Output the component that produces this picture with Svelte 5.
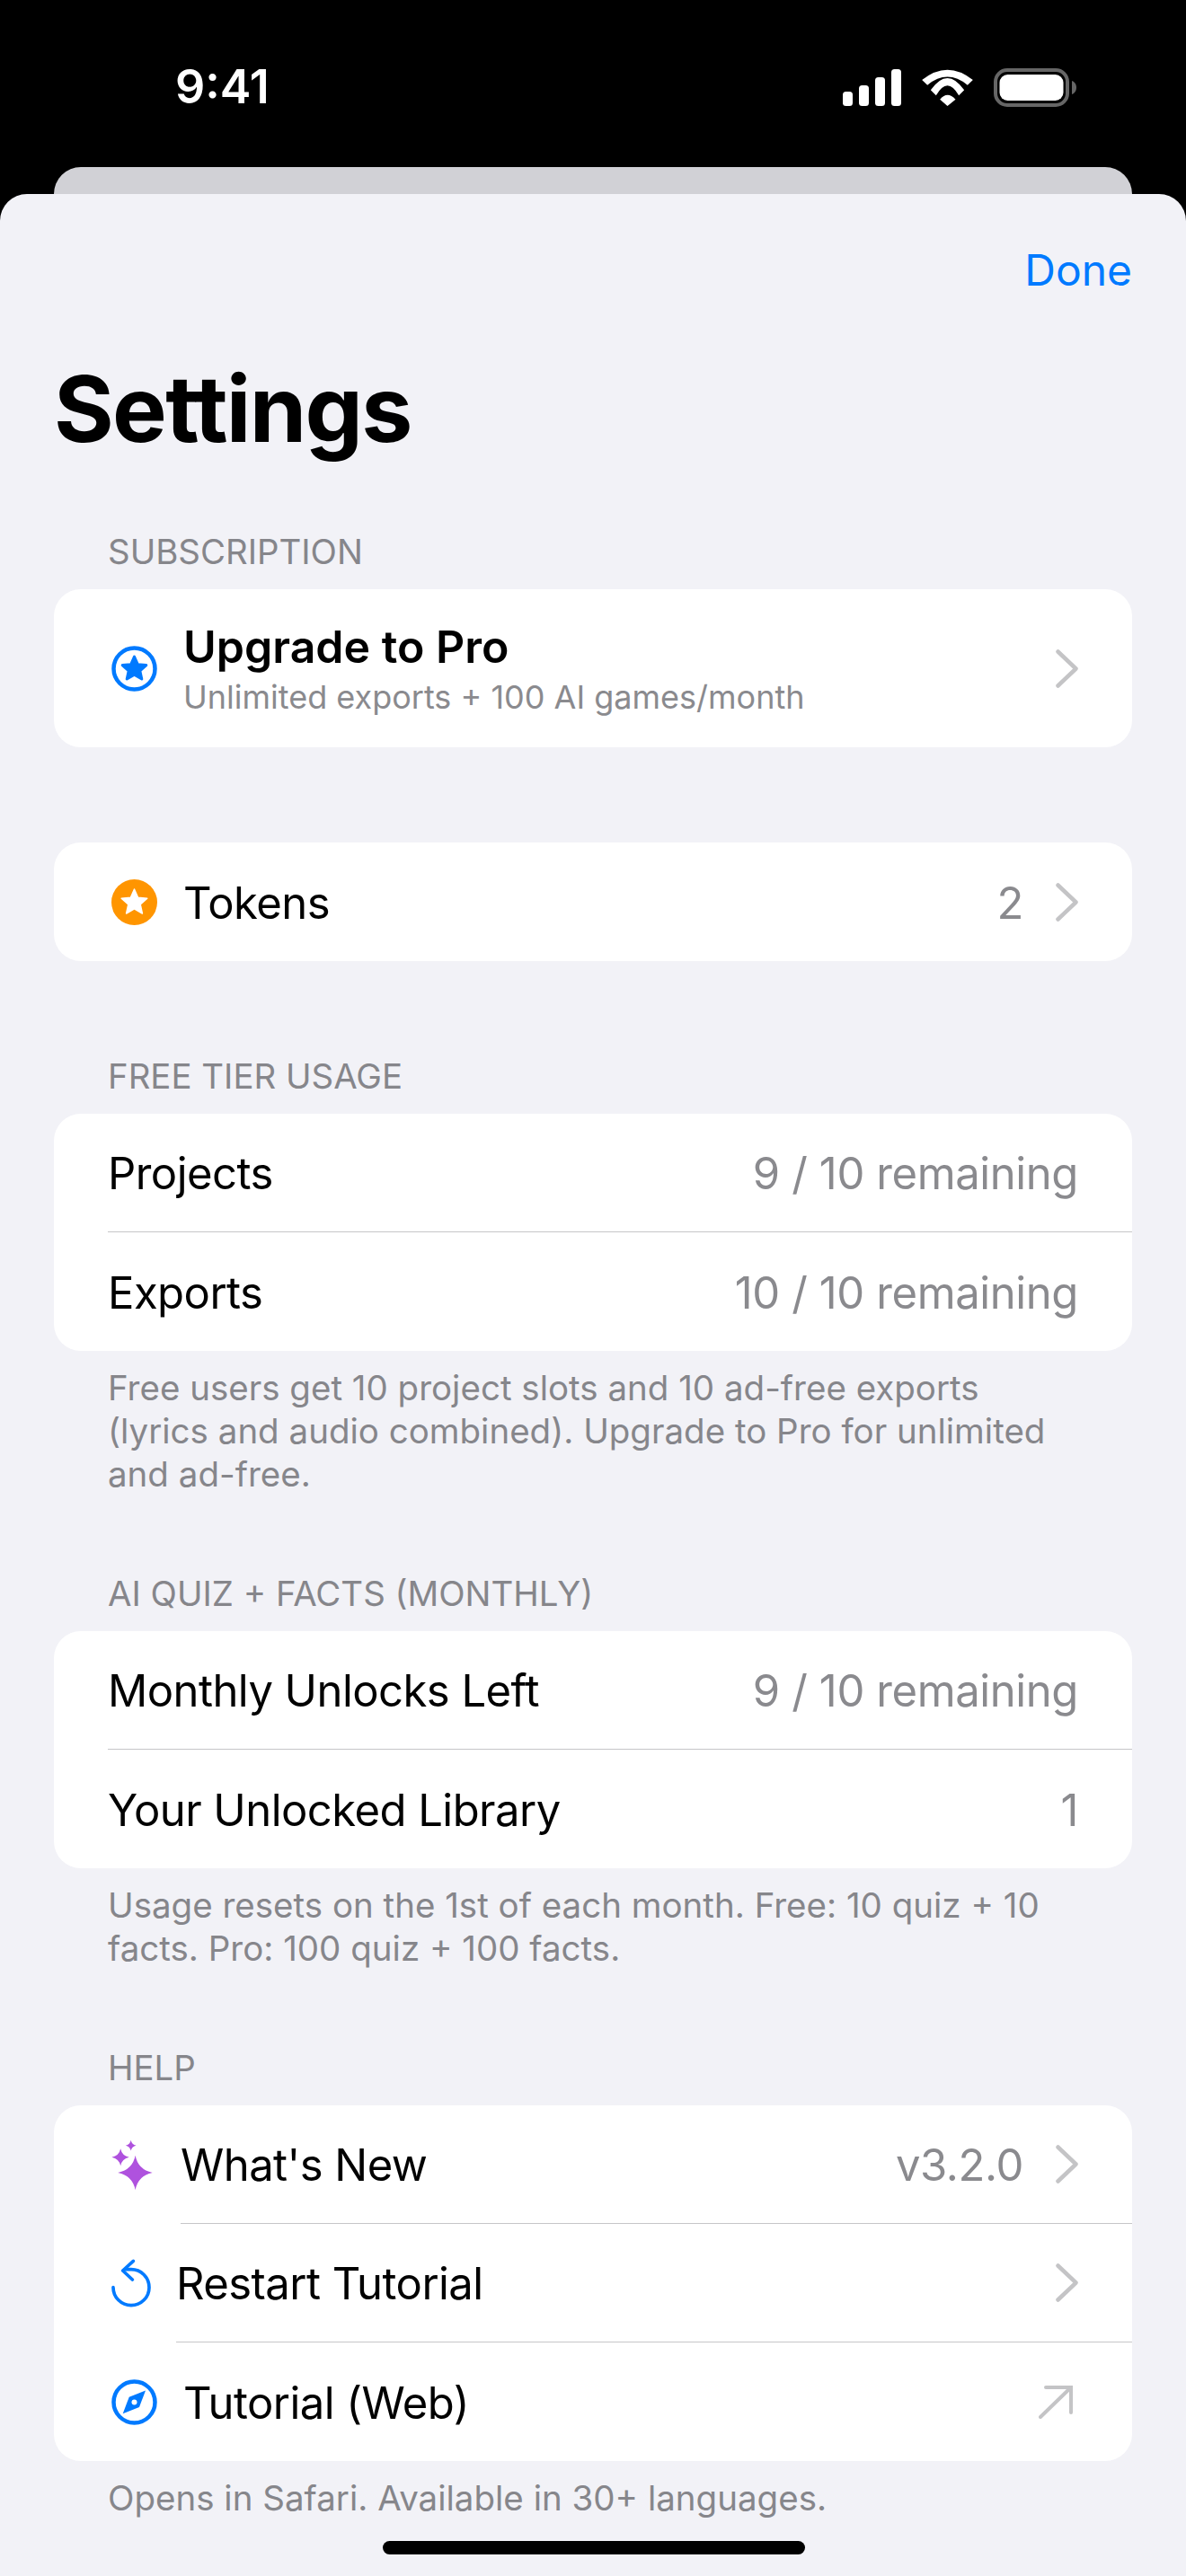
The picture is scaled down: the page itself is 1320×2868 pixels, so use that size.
<script lang="ts">
  let { version = "v3.2.0" } = $props();
</script>

{#snippet chevron()}
  <svg class="chev" width="25" height="43" viewBox="0 0 25 43"><path d="M2.5 2.5 L22.5 21.5 L2.5 40.5" /></svg>
{/snippet}

<div class="screen">
  <header class="status">
    <span class="time">9:41</span>
    <div class="status-icons">
      <svg width="65" height="41" viewBox="0 0 65 41" fill="#fff">
        <rect x="0" y="25" width="11" height="16" rx="3.5" />
        <rect x="18" y="18" width="11" height="23" rx="3.5" />
        <rect x="36" y="9" width="11" height="32" rx="3.5" />
        <rect x="54" y="0" width="11" height="41" rx="3.5" />
      </svg>
      <svg width="57" height="41" viewBox="375 77 170 123" fill="#fff">
        <path d="M375 113 Q460 45 545 113 L527 130 Q460 75 393 130 Z" />
        <path d="M404 147 Q460 67 516 147 L498 165 Q460 99 422 165 Z" />
        <path d="M435 178 Q460 148 487 178 L460 200 Z" />
      </svg>
      <svg width="92" height="43" viewBox="0 0 92 43">
        <rect x="2" y="2" width="80" height="39" rx="13" fill="none" stroke="#666" stroke-width="4" />
        <rect x="6.500" y="7" width="71" height="29" rx="9" fill="#fff" />
        <path d="M87 14 C90 15 92 18 92 21.500 C92 25 90 28 87 29 Z" fill="#666" />
      </svg>
    </div>
  </header>

  <div class="back-card"></div>

  <main class="sheet">
    <nav class="nav"><span class="done">Done</span></nav>
    <h1>Settings</h1>

    <section class="sub-section">
      <h2>SUBSCRIPTION</h2>
      <div class="card">
        <div class="row tall">
          <svg class="icon" width="51" height="51" viewBox="0 0 51 51">
            <circle cx="25.500" cy="25.500" r="23" fill="none" stroke="#007aff" stroke-width="4.500" />
            <path d="M25.500 12 L29.400 20.800 L38.800 21.600 L31.800 27.900 L33.800 37 L25.500 32.200 L17.200 37 L19.200 27.900 L12.200 21.600 L21.600 20.800 Z" fill="#007aff" stroke="#007aff" stroke-width="3" stroke-linejoin="round" />
          </svg>
          <div class="body">
            <div class="stack">
              <span class="strong">Upgrade to Pro</span>
              <span class="sub">Unlimited exports + 100 AI games/month</span>
            </div>
            {@render chevron()}
          </div>
        </div>
      </div>
    </section>

    <section class="token-section">
      <div class="card">
        <div class="row">
          <svg class="icon" width="51" height="51" viewBox="0 0 51 51">
            <circle cx="25.500" cy="25.500" r="25.500" fill="#ff9500" />
            <path d="M25.500 11 L29.600 20.300 L39.800 21.300 L32.200 28 L34.400 38 L25.500 32.900 L16.600 38 L18.800 28 L11.200 21.300 L21.400 20.300 Z" fill="#fff" stroke="#fff" stroke-width="1.500" stroke-linejoin="round" />
          </svg>
          <div class="body">
            <span class="label">Tokens</span>
            <span class="value">2</span>
            {@render chevron()}
          </div>
        </div>
      </div>
    </section>

    <section class="usage-section">
      <h2>FREE TIER USAGE</h2>
      <div class="card">
        <div class="row plain"><div class="body line"><span class="label">Projects</span><span class="value">9 / 10 remaining</span></div></div>
        <div class="row plain"><div class="body"><span class="label">Exports</span><span class="value">10 / 10 remaining</span></div></div>
      </div>
      <p class="foot">Free users get 10 project slots and 10 ad-free exports<br />(lyrics and audio combined). Upgrade to Pro for unlimited<br />and ad-free.</p>
    </section>

    <section>
      <h2>AI QUIZ + FACTS (MONTHLY)</h2>
      <div class="card">
        <div class="row plain"><div class="body line"><span class="label">Monthly Unlocks Left</span><span class="value">9 / 10 remaining</span></div></div>
        <div class="row plain"><div class="body"><span class="label">Your Unlocked Library</span><span class="value">1</span></div></div>
      </div>
      <p class="foot">Usage resets on the 1st of each month. Free: 10 quiz + 10<br />facts. Pro: 100 quiz + 100 facts.</p>
    </section>

    <section>
      <h2>HELP</h2>
      <div class="card">
        <div class="row">
          <svg class="icon" width="46" height="57" viewBox="254 127 140 171" fill="#af52de">
            <path d="M335 180 Q344 228 393 238 Q344 248 335 297 Q326 248 276 238 Q326 228 335 180 Z" />
            <path d="M285 157 Q290 181 314 186 Q290 191 285 215 Q280 191 255 186 Q280 181 285 157 Z" />
            <path d="M320 128 Q323 143 338 146 Q323 149 320 164 Q317 149 302 146 Q317 143 320 128 Z" />
          </svg>
          <div class="body line tight-a">
            <span class="label">What's New</span>
            <span class="value">{version}</span>
            {@render chevron()}
          </div>
        </div>
        <div class="row">
          <svg class="icon" width="45" height="54" viewBox="252 523 135 162" fill="none" stroke="#007aff" stroke-width="11" stroke-linecap="round" stroke-linejoin="round">
            <path d="M258 618 A60 60 0 1 0 318 558 L300 558" />
            <path d="M325 530 L290 562 L322 592" />
          </svg>
          <div class="body line tight-b">
            <span class="label">Restart Tutorial</span>
            {@render chevron()}
          </div>
        </div>
        <div class="row">
          <svg class="icon" width="51" height="51" viewBox="0 0 51 51">
            <circle cx="25.500" cy="25.500" r="23" fill="none" stroke="#007aff" stroke-width="4.500" />
            <path d="M38 12.500 L31 31 L12.700 38.300 L19.700 19.800 Z" fill="#007aff" />
            <circle cx="25.500" cy="25.500" r="3" fill="#fff" />
          </svg>
          <div class="body">
            <span class="label">Tutorial (Web)</span>
            <svg class="ext" width="38" height="37" viewBox="0 0 38 37" fill="none" stroke="#c4c4c6" stroke-width="4" stroke-linecap="round"><path d="M8 2 L36 2 L36 30 M36 2 L2 35" /></svg>
          </div>
        </div>
      </div>
      <p class="foot">Opens in Safari. Available in 30+ languages.</p>
    </section>

    <div class="home-bar"></div>
  </main>
</div>

<style>
  :global(body) { background: #000; }

  .screen {
    width: 1320px;
    height: 2868px;
    overflow: hidden;
    background: #000;
    font-family: Inter, "Liberation Sans", sans-serif;
    color: #000;
    display: flex;
    flex-direction: column;
  }

  .status {
    height: 186px;
    flex: none;
    box-sizing: border-box;
    padding: 72px 122px 0 195px;
    display: flex;
    justify-content: space-between;
    align-items: flex-start;
  }
  .time { color: #fff; font-size: 52px; font-weight: 600; line-height: 50px; }
  .status-icons { display: flex; gap: 23px; align-items: center; padding-top: 4px; }

  .back-card {
    height: 30px;
    flex: none;
    margin: 0 60px;
    background: #d1d1d6;
    border-radius: 30px 30px 0 0;
  }

  .sheet {
    position: relative;
    flex: 1;
    background: #f2f2f7;
    border-radius: 30px 30px 0 0;
    padding: 0 60px;
  }

  .nav { display: flex; justify-content: flex-end; padding-top: 55px; height: 60px; }
  .done { color: #007aff; font-size: 48px; line-height: 60px; }

  h1 { margin: 64px 0 0; font-size: 102px; font-weight: 700; line-height: 120px; letter-spacing: -1.7px; }

  section { margin-top: 85px; }
  .sub-section { margin-top: 75px; }
  .token-section { margin-top: 106px; }
  .usage-section { margin-top: 104px; }

  h2 {
    margin: 0 0 18px 60px;
    font-size: 38.4px;
    font-weight: 400;
    line-height: 48px;
    color: #86868b;
  }

  .card { background: #fff; border-radius: 30px; overflow: hidden; }

  .row { display: flex; align-items: stretch; height: 132px; padding-left: 64px; }
  .row.tall { height: 176px; }
  .row.plain { padding-left: 60px; }

  .icon { flex: none; align-self: center; margin-right: 29px; }

  .body {
    flex: 1;
    min-width: 0;
    display: flex;
    align-items: center;
    padding-right: 60px;
    box-sizing: border-box;
  }
  .line { border-bottom: 1.5px solid #c6c6c8; }
  .tight-a { margin-left: 2px; }
  .tight-b { margin-left: -2px; }

  .label { flex: 1; font-size: 49px; letter-spacing: -0.55px; padding-top: 2px; }
  .value { font-size: 49px; color: #8a8a8e; letter-spacing: -0.4px; padding-top: 2px; }
  .stack { flex: 1; display: flex; flex-direction: column; padding-top: 3px; }
  .strong { font-size: 50px; font-weight: 600; line-height: 60px; }
  .sub { font-size: 36px; color: #8a8a8e; line-height: 52px; }

  .chev { flex: none; margin-left: 36px; }
  .chev path { fill: none; stroke: #c4c4c6; stroke-width: 4.500; stroke-linecap: round; stroke-linejoin: round; }
  .ext { flex: none; margin-right: 6px; }

  .foot {
    margin: 17px 0 0 60px;
    font-size: 38.5px;
    line-height: 48px;
    color: #86868b;
  }

  .home-bar {
    position: absolute;
    left: 426px;
    bottom: 24px;
    width: 470px;
    height: 15px;
    background: #000;
    border-radius: 8px;
  }
</style>
